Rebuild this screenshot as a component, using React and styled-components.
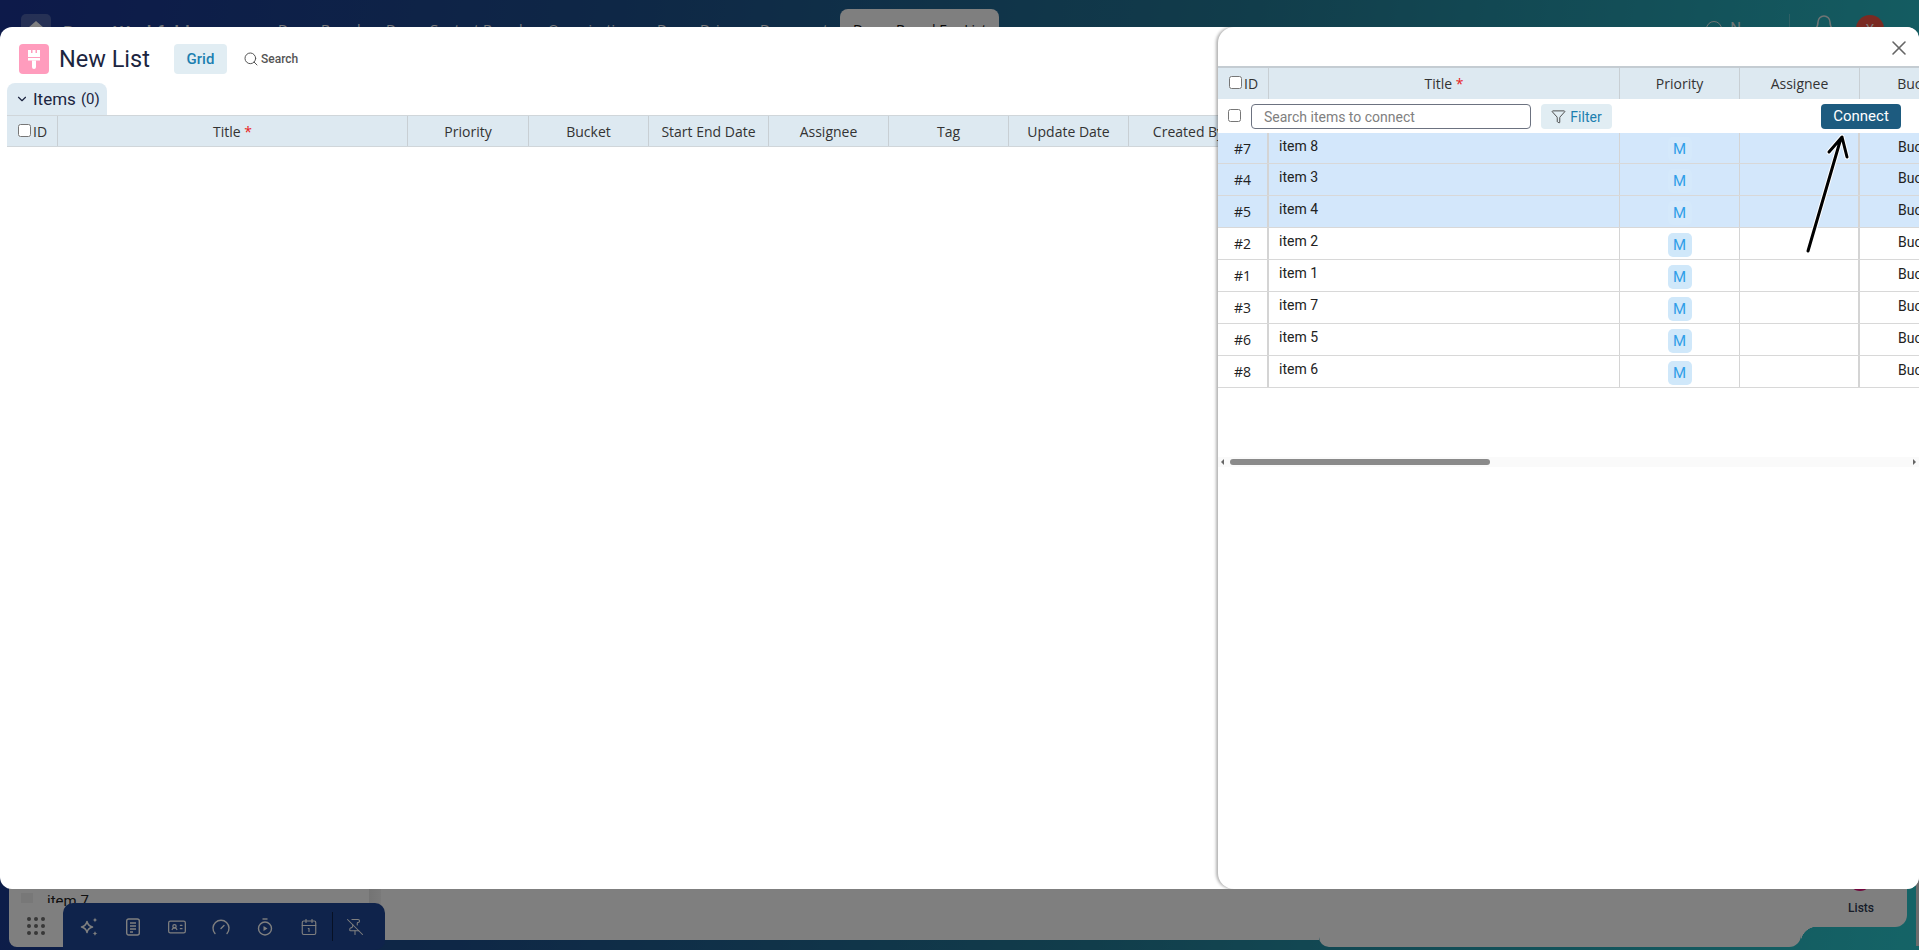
import React from "react";
import styled, { createGlobalStyle } from "styled-components";
import { X, Search, ChevronDown, Filter, Bell, Calendar1, PinOff, IdCard } from "lucide-react";

const GlobalStyle = createGlobalStyle`
  html, body {
    margin: 0;
    padding: 0;
    height: 100%;
    overflow: hidden;
    font-family: "Roboto", "Liberation Sans", sans-serif;
  }
  * {
    box-sizing: border-box;
  }
`;

const navItems = [
  ["Demo Board", 108],
  ["Demo Contact Board", 162],
  ["Organization", 109],
  ["Demo Drive", 103],
  ["Document", 95],
];
const mainCols = [
  ["Title", 350, true],
  ["Priority", 121],
  ["Bucket", 120],
  ["Start End Date", 120],
  ["Assignee", 120],
  ["Tag", 120],
  ["Update Date", 120],
  ["Created By", 120],
];
const panelCols = [
  ["Title", 351, true],
  ["Priority", 120],
  ["Assignee", 120],
  ["Bucket", 120],
];
const rows = [
  { id: "#7", title: "item 8", selected: true },
  { id: "#4", title: "item 3", selected: true },
  { id: "#5", title: "item 4", selected: true },
  { id: "#2", title: "item 2" },
  { id: "#1", title: "item 1" },
  { id: "#3", title: "item 7" },
  { id: "#6", title: "item 5" },
  { id: "#8", title: "item 6" },
];

export default function App() {
  return (
    <Page>
      <GlobalStyle />
      <TopBar>
        <HomeTile>
          <svg width="16" height="16" viewBox="0 0 16 16">
            <path d="M8 0 16 7v9H0V7z" fill="#fff" />
          </svg>
        </HomeTile>
        <Workspace>DemoWorkfolder</Workspace>
        <Nav>
          {navItems.map(([label, w]) => (
            <NavItem key={label} $w={w}>
              {label}
            </NavItem>
          ))}
          <NavItem $w={159} $active>
            Demo Board For List
          </NavItem>
        </Nav>
        <TopRight>
          <HelpRing />
          <HelpLabel>N</HelpLabel>
          <TopDivider />
          <Bell size={24} color="#dfe8e8" strokeWidth={1.5} />
          <Avatar>Y</Avatar>
        </TopRight>
      </TopBar>
      <Content>
        <ListColumn>
          <ListRow>
            <ListThumb />
            <span>item 7</span>
          </ListRow>
        </ListColumn>
        <ColumnGutter />
        <MiddlePane />
        <BoardPane>
          <BoardTop>
            <BoardDot />
            <BoardLabel>Lists</BoardLabel>
          </BoardTop>
          <BoardFoot />
        </BoardPane>
      </Content>
      <EdgeStrip />
      <DockGrid>
        {Array.from({ length: 9 }).map((_, i) => (
          <DockDot key={i} />
        ))}
      </DockGrid>
      <Dock>
        <DockIcon>
          <svg width="22" height="22" viewBox="0 0 22 22" fill="none" stroke="currentColor" strokeWidth="1.5">
            <path d="M9 5.500c.8 3.500 2 4.800 5.500 5.500-3.500.8-4.700 2-5.500 5.500C8.200 13 7 11.800 3.500 11 7 10.300 8.200 9 9 5.500z" strokeLinejoin="round" />
            <path d="M17 1.500c.3 1.600 1 2.300 2.500 2.500-1.500.3-2.200 1-2.500 2.500-.3-1.500-1-2.200-2.500-2.500 1.500-.2 2.200-.9 2.500-2.500zM17 15c.3 1.600 1 2.300 2.500 2.500-1.500.3-2.200 1-2.500 2.500-.3-1.500-1-2.200-2.500-2.500 1.500-.2 2.200-.9 2.500-2.500z" fill="currentColor" stroke="none" />
          </svg>
        </DockIcon>
        <DockIcon>
          <svg width="16" height="18" viewBox="0 0 16 18" fill="none" stroke="currentColor" strokeWidth="1.4">
            <rect x="1.700" y="1" width="12.600" height="16" rx="2" />
            <path d="M5 5h6M5 8h6M5 11h6M5 14h3" />
          </svg>
        </DockIcon>
        <DockIcon>
          <IdCard size={20} strokeWidth={1.5} />
        </DockIcon>
        <DockIcon>
          <svg width="18" height="18" viewBox="0 0 18 18" fill="none" stroke="currentColor" strokeWidth="1.4" strokeLinecap="round">
            <path d="M3 15.500A8 8 0 1 1 15 15.500M9 10.500l3-3" />
          </svg>
        </DockIcon>
        <DockIcon>
          <svg width="16" height="18" viewBox="0 0 16 18" fill="none" stroke="currentColor" strokeWidth="1.4">
            <circle cx="8" cy="10.500" r="6.500" />
            <path d="M5.500 1h5" />
            <path d="M6.500 8v5l4-2.500z" fill="currentColor" stroke="none" />
          </svg>
        </DockIcon>
        <DockIcon>
          <Calendar1 size={18} strokeWidth={1.5} />
        </DockIcon>
        <DockDivider />
        <DockIcon>
          <PinOff size={18} strokeWidth={1.4} />
        </DockIcon>
      </Dock>
      <Overlay />
      <Modal>
        <ModalHead>
          <ListBadge>
            <svg width="14" height="20" viewBox="0 0 14 20" fill="#fff">
              <path d="M1 1h3v3h1.500V1h3v3H10V1h3v7H1z" />
              <path d="M1 9h12v2.500H1z" />
              <path d="M5 11.500h4V18a2 2 0 0 1-4 0z" />
            </svg>
          </ListBadge>
          <ListTitle>New List</ListTitle>
          <ViewTab>Grid</ViewTab>
          <SearchLink>
            <Search size={16} strokeWidth={1.5} color="#555" />
            Search
          </SearchLink>
        </ModalHead>
        <ItemsTab>
          <ChevronDown size={14} strokeWidth={2} />
          Items
          <ItemsCount>(0)</ItemsCount>
        </ItemsTab>
        <HeaderRow>
          <IdHead>
            <input type="checkbox" />
            ID
          </IdHead>
          {mainCols.map(([label, w, required]) => (
            <HeadCell key={label} $w={w}>
              {label}
              {required && <Req> *</Req>}
            </HeadCell>
          ))}
        </HeaderRow>
        <SidePanel>
          <PanelTop>
            <CloseBtn>
              <X size={24} strokeWidth={1.6} color="#666" />
            </CloseBtn>
          </PanelTop>
          <PanelTable>
            <HeaderRow $panel>
              <IdHead>
                <input type="checkbox" />
                ID
              </IdHead>
              {panelCols.map(([label, w, required]) => (
                <HeadCell key={label} $w={w}>
                  {label}
                  {required && <Req> *</Req>}
                </HeadCell>
              ))}
            </HeaderRow>
            <ConnectBar>
              <input type="checkbox" />
              <SearchInput placeholder="Search items to connect" />
              <FilterBtn>
                <Filter size={15} strokeWidth={1.5} color="#444" />
                Filter
              </FilterBtn>
              <ConnectBtn>Connect</ConnectBtn>
            </ConnectBar>
            {rows.map((r) => (
              <Row key={r.id} $selected={r.selected}>
                <IdCell>{r.id}</IdCell>
                <TitleCell>{r.title}</TitleCell>
                <PriorityCell>
                  <PriorityBadge $selected={r.selected}>M</PriorityBadge>
                </PriorityCell>
                <AssigneeCell />
                <BucketCell>Bucket 1</BucketCell>
              </Row>
            ))}
          </PanelTable>
          <ScrollTrack>
            <ScrollArrow $left />
            <ScrollThumb />
            <ScrollArrow />
          </ScrollTrack>
        </SidePanel>
      </Modal>
      <Pointer width="50" height="130" viewBox="0 0 50 130" fill="none">
        <path d="M5 123 38 10M26 24l13-15 5 20" stroke="#fff" strokeWidth="5" strokeLinecap="round" strokeLinejoin="round" />
        <path d="M5 123 38 10M26 24l13-15 5 20" stroke="#000" strokeWidth="3" strokeLinecap="round" strokeLinejoin="round" />
      </Pointer>
    </Page>
  );
}

const Page = styled.div`
  position: relative;
  width: 1919px;
  height: 950px;
  display: flex;
  flex-direction: column;
  overflow: hidden;
  background: linear-gradient(100deg, #1a3494 0%, #1d4f8c 30%, #237a96 60%, #2ac8ce 100%);
`;

const TopBar = styled.header`
  height: 58px;
  flex-shrink: 0;
  display: flex;
  align-items: flex-start;
  padding: 14px 35px 0 21px;
`;

const HomeTile = styled.div`
  width: 30px;
  height: 30px;
  border-radius: 5px;
  background: rgba(255, 255, 255, 0.22);
  display: flex;
  align-items: center;
  justify-content: center;
`;

const Workspace = styled.div`
  margin: 4px 0 0 12px;
  width: 150px;
  font-size: 19px;
  font-weight: 500;
  line-height: 30px;
  color: #dfe3ea;
`;

const Nav = styled.nav`
  margin: -5px 0 0 50px;
  display: flex;
  align-items: flex-start;
`;

const NavItem = styled.div`
  width: ${(p) => p.$w}px;
  padding-left: ${(p) => (p.$active ? "13px" : "15px")};
  height: 52px;
  border-radius: 8px 8px 0 0;
  font-family: "Open Sans", sans-serif;
  font-size: 14px;
  line-height: 42px;
  white-space: nowrap;
  overflow: hidden;
  color: ${(p) => (p.$active ? "#111" : "#eef1f4")};
  background: ${(p) => (p.$active ? "#fff" : "transparent")};
`;

const TopRight = styled.div`
  margin-left: auto;
  display: flex;
  align-items: flex-start;
`;

const HelpRing = styled.div`
  width: 16px;
  height: 16px;
  margin-top: 7px;
  border: 1.5px solid #dfe8e8;
  border-radius: 50%;
`;

const HelpLabel = styled.span`
  margin-left: 8px;
  font-size: 15px;
  line-height: 28px;
  color: #dfe8e8;
`;

const TopDivider = styled.div`
  width: 1px;
  height: 30px;
  margin: 0 22px 0 48px;
  background: rgba(255, 255, 255, 0.25);
`;

const Avatar = styled.div`
  width: 28px;
  height: 28px;
  margin: 1px 0 0 20px;
  border-radius: 50%;
  background: #f55445;
  color: #fff;
  font-size: 13px;
  text-align: center;
  line-height: 28px;
`;

const Content = styled.main`
  flex: 1;
  display: flex;
  padding: 0 12px 3px 9px;
  min-height: 0;
`;

const ListColumn = styled.section`
  width: 360px;
  background: #fff;
  display: flex;
  flex-direction: column;
  justify-content: flex-end;
  padding: 0 12px 40px;
  border-radius: 8px;
`;

const ListRow = styled.div`
  display: flex;
  gap: 14px;
  height: 14px;
  font-size: 15px;
  line-height: 16px;
  color: #222;
`;

const ListThumb = styled.div`
  width: 12px;
  height: 14px;
  background: #f0f0f0;
`;

const ColumnGutter = styled.div`
  width: 12px;
  background: linear-gradient(90deg, #e8e8e8, #f4f4f4);
  margin-bottom: 7px;
`;

const MiddlePane = styled.section`
  width: 938px;
  background: #fff;
  margin-bottom: 7px;
`;

const BoardPane = styled.section`
  flex: 1;
  display: flex;
  flex-direction: column;
`;

const BoardTop = styled.div`
  flex: 1;
  background: #fff;
  border-radius: 8px 0 12px 0;
  display: flex;
  flex-direction: column;
  align-items: flex-end;
  justify-content: flex-end;
  padding: 0 33px 12px 0;
`;

const BoardDot = styled.div`
  width: 22px;
  height: 22px;
  margin: 0 3px 10px 0;
  border-radius: 50%;
  background: #e0107a;
`;

const BoardLabel = styled.div`
  font-size: 12px;
  font-weight: 500;
  line-height: 14px;
  color: #2f3a52;
`;

const BoardFoot = styled.div`
  position: relative;
  width: 482px;
  height: 20px;
  flex-shrink: 0;
  background: #fff;
  border-radius: 0 0 12px 10px;

  &::after {
    content: "";
    position: absolute;
    left: 100%;
    top: 0;
    width: 16px;
    height: 16px;
    background: radial-gradient(circle at 100% 100%, transparent 16px, #fff 16.5px);
  }
`;

const EdgeStrip = styled.div`
  position: absolute;
  right: 0;
  top: 58px;
  bottom: 4px;
  width: 3px;
  background: #d8d8d8;
`;

const DockGrid = styled.div`
  position: absolute;
  left: 9px;
  bottom: 3px;
  width: 54px;
  height: 44px;
  padding: 14px 18px 0;
  border-radius: 0 0 12px 12px;
  background: #fff;
  display: grid;
  grid-template-columns: repeat(3, 4px);
  grid-auto-rows: 4px;
  gap: 3px;
`;

const DockDot = styled.span`
  border-radius: 50%;
  background: #707070;
`;

const Dock = styled.div`
  position: absolute;
  left: 63px;
  bottom: 0;
  width: 322px;
  height: 47px;
  border-radius: 10px 10px 10px 0;
  background: #1e4696;
  display: flex;
  align-items: center;
  padding-left: 4px;
  color: #fff;
`;

const DockIcon = styled.div`
  width: 44px;
  height: 24px;
  flex-shrink: 0;
  display: flex;
  align-items: center;
  justify-content: center;
`;

const DockDivider = styled.div`
  width: 1px;
  height: 29px;
  margin-left: 1px;
  background: rgba(0, 0, 0, 0.5);
`;

const Overlay = styled.div`
  position: absolute;
  inset: 0;
  background: rgba(0, 0, 0, 0.5);
`;

const Modal = styled.div`
  position: absolute;
  left: 0;
  top: 27px;
  width: 1919px;
  height: 862px;
  background: #fff;
  border-radius: 12px;
  overflow: hidden;
`;

const ModalHead = styled.div`
  display: flex;
  align-items: center;
  padding: 17px 0 0 19px;
`;

const ListBadge = styled.div`
  width: 30px;
  height: 30px;
  border-radius: 4px;
  background: #ff9cbd;
  display: flex;
  align-items: center;
  justify-content: center;
`;

const ListTitle = styled.h1`
  margin: 0 0 0 10px;
  width: 115px;
  font-size: 23.5px;
  font-weight: 400;
  color: #1c2540;
`;

const ViewTab = styled.div`
  width: 53px;
  height: 30px;
  border-radius: 4px;
  background: #e1edf3;
  color: #1c7fb0;
  font-size: 15px;
  font-weight: 500;
  text-align: center;
  line-height: 31px;
`;

const SearchLink = styled.div`
  margin-left: 16px;
  display: flex;
  align-items: center;
  gap: 2px;
  font-size: 12px;
  font-weight: 500;
  color: #555;
`;

const ItemsTab = styled.div`
  width: 100px;
  height: 32px;
  margin: 9px 0 0 7px;
  padding-left: 8px;
  border-radius: 8px 8px 0 0;
  background: #deeaf2;
  display: flex;
  align-items: center;
  gap: 4px;
  font-size: 17px;
  font-weight: 400;
  color: #1c2540;
`;

const ItemsCount = styled.span`
  font-size: 15px;
  font-weight: 400;
  margin-left: 1px;
`;

const HeaderRow = styled.div`
  display: flex;
  height: ${(p) => (p.$panel ? "33px" : "32px")};
  width: max-content;
  margin-left: ${(p) => (p.$panel ? "0" : "7px")};
  background: #dde9f1;
  border-top: ${(p) => (p.$panel ? "2px solid #c4ccd2" : "1px solid #d0d6da")};
  border-bottom: ${(p) => (p.$panel ? "none" : "1px solid #d0d6da")};
  font-family: "Open Sans", sans-serif;
  font-size: 14px;
  color: #333;
`;

const IdHead = styled.div`
  width: 51px;
  display: flex;
  align-items: center;
  padding-left: 11px;
  border-right: 1px solid #c8cfd4;

  input {
    width: 13px;
    height: 13px;
    margin: 0 2px 2px 0;
  }
`;

const HeadCell = styled.div`
  width: ${(p) => p.$w}px;
  display: flex;
  align-items: center;
  justify-content: center;
  white-space: pre;
  border-right: 1px solid #c8cfd4;
`;

const Req = styled.span`
  color: #e82020;
`;

const SidePanel = styled.aside`
  position: absolute;
  left: 1218px;
  top: 0;
  right: 0;
  bottom: 0;
  background: #fff;
  border-radius: 16px 10px 12px 16px;
  box-shadow: -2px 0 3px rgba(0, 0, 0, 0.3);
  overflow: hidden;
`;

const PanelTop = styled.div`
  height: 39px;
  display: flex;
  align-items: center;
  justify-content: flex-end;
  padding: 2px 8px 0 0;
`;

const CloseBtn = styled.div`
  display: flex;
`;

const PanelTable = styled.div`
  height: 391px;
  overflow: hidden;
`;

const ConnectBar = styled.div`
  height: 34px;
  width: 701px;
  display: flex;
  align-items: center;
  padding: 1px 18px 0 10px;
  background: #fff;

  input[type="checkbox"] {
    width: 13px;
    height: 13px;
    margin: 0 0 3px 0;
  }
`;

const SearchInput = styled.input`
  width: 280px;
  height: 25px;
  margin-left: 10px;
  padding: 0 12px;
  border: 1px solid #6c7280;
  border-radius: 4px;
  font-family: "Roboto", sans-serif;
  font-size: 14px;
  outline: none;

  &::placeholder {
    color: #808080;
  }
`;

const FilterBtn = styled.div`
  width: 71px;
  height: 25px;
  margin-left: 10px;
  border-radius: 4px;
  background: #e1edf3;
  color: #1c7fb0;
  font-size: 14px;
  display: flex;
  align-items: center;
  justify-content: center;
  gap: 4px;
`;

const ConnectBtn = styled.div`
  width: 80px;
  height: 25px;
  margin-left: auto;
  border-radius: 4px;
  background: #1d5b7f;
  color: #fff;
  font-size: 15px;
  text-align: center;
  line-height: 25px;
`;

const Row = styled.div`
  display: flex;
  height: 32px;
  width: max-content;
  background: ${(p) => (p.$selected ? "#d3e7fb" : "#fff")};
  border-bottom: 1px solid #d8d8d8;
  font-size: 14px;
  color: #222;

  &:nth-child(3) {
    height: 31px;
  }
`;

const IdCell = styled.div`
  width: 51px;
  border-right: 2px solid #d4d4d4;
  font-family: "Open Sans", sans-serif;
  display: flex;
  align-items: center;
  justify-content: center;
`;

const TitleCell = styled.div`
  width: 351px;
  padding: 3px 0 0 10px;
  border-right: 1px solid #d4d4d4;
  line-height: 20px;
`;

const PriorityCell = styled.div`
  width: 120px;
  padding-top: 2px;
  border-right: 1px solid #d4d4d4;
  display: flex;
  align-items: center;
  justify-content: center;
`;

const PriorityBadge = styled.span`
  width: 24px;
  height: 24px;
  border-radius: 5px;
  background: ${(p) => (p.$selected ? "#d5e9fb" : "#d0e8fa")};
  color: #2f9ee8;
  font-size: 15px;
  text-align: center;
  line-height: 24px;
`;

const AssigneeCell = styled.div`
  width: 120px;
  border-right: 2px solid #d4d4d4;
`;

const BucketCell = styled.div`
  width: 120px;
  padding-left: 38px;
  line-height: 29px;
  white-space: nowrap;
`;

const ScrollTrack = styled.div`
  height: 10px;
  display: flex;
  align-items: center;
  justify-content: space-between;
  position: relative;
  padding: 0 3px;
  background: #fafafa;
`;

const ScrollArrow = styled.span`
  width: 0;
  height: 0;
  border-top: 3px solid transparent;
  border-bottom: 3px solid transparent;
  border-right: ${(p) => (p.$left ? "3px solid #666" : "none")};
  border-left: ${(p) => (p.$left ? "none" : "3px solid #666")};
`;

const ScrollThumb = styled.div`
  position: absolute;
  left: 12px;
  top: 2px;
  width: 260px;
  height: 6px;
  border-radius: 3px;
  background: #8a8a8a;
`;

const Pointer = styled.svg`
  position: absolute;
  left: 1803px;
  top: 128px;
`;
